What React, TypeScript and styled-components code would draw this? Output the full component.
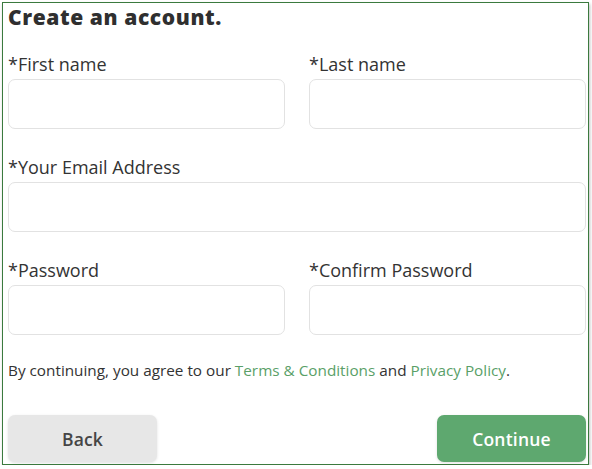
import React from "react";
import styled, { createGlobalStyle } from "styled-components";

const GlobalStyle = createGlobalStyle`
  html, body {
    margin: 0;
    padding: 0;
    background: #ffffff;
  }
  * {
    box-sizing: border-box;
  }
`;

const Card = styled.form`
  margin: 2px 0 0 2px;
  width: 587px;
  height: 463px;
  border: 1px solid #3b7a3e;
  background: #ffffff;
  box-shadow: 1px 2px 3px rgba(0, 0, 0, 0.25);
  padding: 2px 2px 0 5px;
  display: flex;
  flex-direction: column;
  font-family: "Open Sans", Lato, sans-serif;
  color: #333333;
`;

const Title = styled.h1`
  margin: 0 0 24px;
  font-size: 21px;
  line-height: 24px;
  font-weight: 800;
  letter-spacing: 0.6px;
  color: #2f2f2f;
`;

const Row = styled.div<{ $cols: number }>`
  display: grid;
  grid-template-columns: repeat(${(p) => p.$cols}, 1fr);
  column-gap: 24px;
  margin-bottom: 27px;
`;

const Field = styled.label`
  display: flex;
  flex-direction: column;
  gap: 4px;
`;

const LabelText = styled.span`
  font-size: 18px;
  line-height: 22px;
  color: #333333;
`;

const Input = styled.input`
  height: 50px;
  width: 100%;
  border: 1px solid #e2e2e2;
  border-radius: 7px;
  background: #ffffff;
  padding: 0 12px;
  font: inherit;
  outline: none;
`;

const Terms = styled.p`
  margin: -2px 0 35px;
  font-size: 15.3px;
  line-height: 20px;
  color: #333333;
`;

const Link = styled.a`
  color: #5a9f68;
  text-decoration: none;
`;

const Actions = styled.div`
  display: flex;
  justify-content: space-between;
`;

const Button = styled.button<{ $primary?: boolean }>`
  width: 149px;
  height: 47px;
  border: none;
  border-radius: 7px;
  font-family: "Open Sans", Lato, sans-serif;
  font-size: 17.5px;
  font-weight: 600;
  letter-spacing: 0.2px;
  cursor: pointer;
  background: ${(p) => (p.$primary ? "#5ea86f" : "#e7e7e7")};
  color: ${(p) => (p.$primary ? "#ffffff" : "#454545")};
  box-shadow: 0 1px 3px rgba(0, 0, 0, 0.12);
`;

const fields = {
  names: ["*First name", "*Last name"],
  passwords: ["*Password", "*Confirm Password"],
};

export default function App() {
  return (
    <>
      <GlobalStyle />
      <Card onSubmit={(e) => e.preventDefault()}>
        <Title>Create an account.</Title>

        <Row $cols={2}>
          {fields.names.map((label) => (
            <Field key={label}>
              <LabelText>{label}</LabelText>
              <Input type="text" />
            </Field>
          ))}
        </Row>

        <Row $cols={1}>
          <Field>
            <LabelText>*Your Email Address</LabelText>
            <Input type="email" />
          </Field>
        </Row>

        <Row $cols={2}>
          {fields.passwords.map((label) => (
            <Field key={label}>
              <LabelText>{label}</LabelText>
              <Input type="password" />
            </Field>
          ))}
        </Row>

        <Terms>
          By continuing, you agree to our <Link href="#">Terms &amp; Conditions</Link> and{" "}
          <Link href="#">Privacy Policy</Link>.
        </Terms>

        <Actions>
          <Button type="button">Back</Button>
          <Button type="submit" $primary>
            Continue
          </Button>
        </Actions>
      </Card>
    </>
  );
}
